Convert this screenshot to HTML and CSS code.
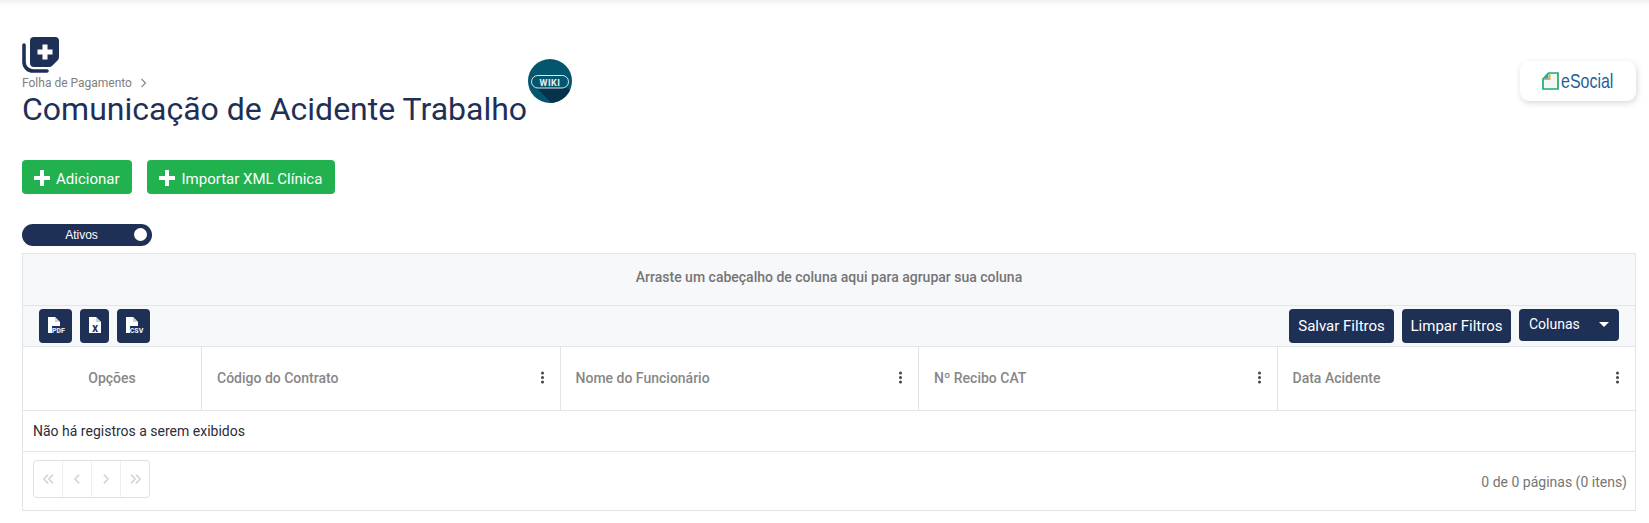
FILE: index.html
```html
<!DOCTYPE html>
<html lang="pt-BR">
<head>
    <meta charset="UTF-8">
    <title>Comunicação de Acidente Trabalho</title>
    <link rel="stylesheet" href="styles.css">
</head>
<body>
    <div class="top-shade"></div>
    <div class="page">
        <div class="header">
            <div class="header-left">
                <svg class="module-icon" width="39" height="38" viewBox="0 0 39 38">
                    <path d="M13 1h21a4 4 0 0 1 4 4v16q0 2-1.500 3.500l-5 5q-1.500 1.500-3.500 1.500H13a4 4 0 0 1-4-4V5a4 4 0 0 1 4-4z" fill="#1f3057"/>
                    <path d="M3 9v17a9 9 0 0 0 9 9h14" fill="none" stroke="#1f3057" stroke-width="3.600" stroke-linecap="round"/>
                    <path d="M21.500 8.500h5v5h5v5h-5v5h-5v-5h-5v-5h5z" fill="#fff"/>
                </svg>
                <div class="breadcrumb">
                    <span>Folha de Pagamento</span>
                    <svg width="8" height="10" viewBox="0 0 8 10"><path d="M1.500 1l4 4-4 4" fill="none" stroke="#8a8a8a" stroke-width="1.200"/></svg>
                </div>
                <div class="title-row">
                    <h1>Comunicação de Acidente Trabalho</h1>
                    <a class="wiki-badge">
                        <svg width="44" height="44" viewBox="0 0 44 44">
                            <defs><clipPath id="wiki-clip"><circle cx="22" cy="22" r="22"/></clipPath></defs>
                            <circle cx="22" cy="22" r="22" fill="#04566f"/>
                            <path d="M9 29h30l8 6v12H26z" fill="#06334a" clip-path="url(#wiki-clip)"/>
                            <rect x="3.500" y="16.500" width="37" height="12.500" rx="6.250" fill="#04566f" stroke="#dfe9ec" stroke-width="1"/>
                            <text x="22" y="26.500" text-anchor="middle" class="wiki-text">WIKI</text>
                        </svg>
                    </a>
                </div>
            </div>
            <div class="esocial-card">
                <svg width="17" height="18" viewBox="0 0 17 18">
                    <path d="M6.500 1H16v16H1V7z" fill="#f4f6f1" stroke="#1fa971" stroke-width="1.700"/>
                    <path d="M6.500 1v6H1z" fill="#2f9fdc"/>
                    <path d="M7 1.500h1.500V8H2V6.500h5z" fill="#f2b01e"/>
                </svg>
                <span>eSocial</span>
            </div>
        </div>

        <div class="actions">
            <button class="btn-green">
                <svg width="16" height="16" viewBox="0 0 16 16"><path d="M6 0h4v6h6v4h-6v6H6v-6H0V6h6z" fill="#fff"/></svg>
                Adicionar
            </button>
            <button class="btn-green">
                <svg width="16" height="16" viewBox="0 0 16 16"><path d="M6 0h4v6h6v4h-6v6H6v-6H0V6h6z" fill="#fff"/></svg>
                Importar XML Clínica
            </button>
        </div>

        <div class="toggle">
            <span>Ativos</span>
            <i class="toggle-knob"></i>
        </div>

        <div class="grid">
            <div class="group-panel">Arraste um cabeçalho de coluna aqui para agrupar sua coluna</div>
            <div class="toolbar">
                <div class="export-icons">
                    <button class="btn-export wide">
                        <svg width="33" height="34" viewBox="0 0 33 34">
                            <path d="M9 8h7l5 5v11H9z" fill="#fff"/><path d="M16 8v5h5z" fill="#c9d2e2"/>
                            <rect x="13" y="17" width="13" height="7.500" fill="#1f3057"/>
                            <text x="19.500" y="23.800" text-anchor="middle" class="file-label">PDF</text>
                        </svg>
                    </button>
                    <button class="btn-export">
                        <svg width="29" height="34" viewBox="0 0 29 34">
                            <path d="M9 8h7l5 5v11H9z" fill="#fff"/><path d="M16 8v5h5z" fill="#c9d2e2"/>
                            <text x="15" y="22.500" text-anchor="middle" class="file-label big">X</text>
                        </svg>
                    </button>
                    <button class="btn-export wide">
                        <svg width="33" height="34" viewBox="0 0 33 34">
                            <path d="M9 8h7l5 5v11H9z" fill="#fff"/><path d="M16 8v5h5z" fill="#c9d2e2"/>
                            <rect x="13" y="17" width="13" height="7.500" fill="#1f3057"/>
                            <text x="19.500" y="23.800" text-anchor="middle" class="file-label">CSV</text>
                        </svg>
                    </button>
                </div>
                <div class="toolbar-right">
                    <button class="btn-navy">Salvar Filtros</button>
                    <button class="btn-navy">Limpar Filtros</button>
                    <button class="btn-navy btn-columns">Colunas <i class="caret"></i></button>
                </div>
            </div>
            <div class="grid-head">
                <div class="col col-options">Opções</div>
                <div class="col"><span>Código do Contrato</span><i class="dots"></i></div>
                <div class="col"><span>Nome do Funcionário</span><i class="dots"></i></div>
                <div class="col"><span>Nº Recibo CAT</span><i class="dots"></i></div>
                <div class="col"><span>Data Acidente</span><i class="dots"></i></div>
            </div>
            <div class="no-records">Não há registros a serem exibidos</div>
            <div class="pager-row">
                <div class="pager">
                    <a><svg width="11" height="10" viewBox="0 0 11 10"><path d="M5 .7L.9 5 5 9.300M10 .7L5.900 5 10 9.300"/></svg></a>
                    <a><svg width="6" height="10" viewBox="0 0 6 10"><path d="M5.200 .7L1 5l4.200 4.300"/></svg></a>
                    <a><svg width="6" height="10" viewBox="0 0 6 10"><path d="M.8 .7L5 5 .8 9.300"/></svg></a>
                    <a><svg width="11" height="10" viewBox="0 0 11 10"><path d="M1 .7L5.100 5 1 9.300M6 .7L10.100 5 6 9.300"/></svg></a>
                </div>
                <div class="pager-info">0 de 0 páginas (0 itens)</div>
            </div>
        </div>
    </div>
</body>
</html>
```

FILE: styles.css
```css
body {
    margin: 0;
    font-family: Roboto, Arial, sans-serif;
    background-color: #fff;
    color: #1f3057;
}

.top-shade {
    height: 6px;
    background: linear-gradient(#f1f1f1, #fff);
}

.page {
    padding: 0 13px 0 22px;
}

.header {
    display: flex;
    justify-content: space-between;
    align-items: flex-start;
    padding-top: 30px;
}

.module-icon {
    display: block;
    margin-left: -1px;
}

.breadcrumb {
    display: flex;
    align-items: center;
    gap: 8px;
    height: 16px;
    padding-top: 1px;
    box-sizing: border-box;
    font-size: 12px;
    color: #808080;
}

.title-row {
    position: relative;
    width: 504px;
}

h1 {
    margin: 0;
    font-size: 32px;
    font-weight: 400;
    line-height: 38px;
    white-space: nowrap;
}

.wiki-badge {
    position: absolute;
    top: -31px;
    right: -46px;
}

.wiki-badge svg {
    display: block;
}

.wiki-text {
    font: 700 9px Roboto, sans-serif;
    fill: #e8f0f2;
    letter-spacing: .5px;
}

.esocial-card {
    display: flex;
    align-items: center;
    width: 116px;
    height: 40px;
    padding-left: 22px;
    box-sizing: border-box;
    margin-top: 25px;
    background: #fff;
    border-radius: 9px;
    box-shadow: 1px 2px 6px rgba(0,0,0,0.16);
    color: #1f5f99;
    font-family: "Liberation Sans", sans-serif;
    font-size: 21px;
}

.esocial-card span {
    display: inline-block;
    margin-left: 2px;
    transform: scaleX(.76);
    transform-origin: left center;
}

.actions {
    display: flex;
    gap: 15px;
    margin-top: 32px;
}

button {
    font-family: Roboto, Arial, sans-serif;
    border: none;
    cursor: pointer;
    color: #fff;
}

.btn-green {
    display: flex;
    align-items: center;
    gap: 6px;
    height: 34px;
    padding: 3px 13px 0 12px;
    background-color: #22b14f;
    border-radius: 4px;
    font-size: 15px;
}

.btn-green svg {
    margin-top: -1px;
}

.toggle {
    position: relative;
    width: 130px;
    height: 22px;
    margin-top: 30px;
    background-color: #1f3057;
    border-radius: 11px;
    color: #fff;
    font-family: "Liberation Sans", Arial, sans-serif;
    font-size: 12px;
    line-height: 23px;
    text-align: center;
}

.toggle span {
    display: block;
    padding-right: 11px;
}

.toggle-knob {
    position: absolute;
    top: 4px;
    right: 5px;
    width: 13px;
    height: 13px;
    background: #fff;
    border-radius: 50%;
}

.grid {
    margin-top: 7px;
    border: 1px solid #e1e4e9;
}

.group-panel {
    height: 51px;
    line-height: 47px;
    text-align: center;
    font-size: 14px;
    font-weight: 500;
    color: #757575;
    background-color: #f7f8fa;
    border-bottom: 1px solid #e1e4e9;
}

.toolbar {
    display: flex;
    justify-content: space-between;
    align-items: flex-start;
    height: 41px;
    padding: 3px 16px 0;
    box-sizing: border-box;
    background-color: #f7f8fa;
    border-bottom: 1px solid #e1e4e9;
}

.export-icons,
.toolbar-right {
    display: flex;
    gap: 8px;
}

.btn-export {
    display: block;
    width: 29px;
    height: 34px;
    padding: 0;
    background-color: #1f3057;
    border-radius: 4px;
}

.btn-export svg {
    display: block;
}

.btn-export.wide {
    width: 33px;
}

.file-label {
    font: 900 7px Roboto, sans-serif;
    fill: #dbe6f5;
}

.file-label.big {
    font-size: 9px;
    fill: #1f3057;
}

.btn-navy {
    height: 34px;
    width: 105px;
    padding: 0;
    background-color: #1f3057;
    border-radius: 4px;
    font-size: 15px;
}

.btn-navy + .btn-navy {
    width: 109px;
}

.btn-navy.btn-columns {
    display: flex;
    align-items: center;
    justify-content: space-between;
    width: 100px;
    height: 32px;
    padding: 0 11px 2px 10px;
    font-size: 14px;
}

.caret {
    border-left: 5px solid transparent;
    border-right: 5px solid transparent;
    border-top: 5px solid #fff;
    margin-right: -1px;
}

.grid-head {
    display: grid;
    grid-template-columns: 178px repeat(4, 1fr);
    height: 63px;
    border-bottom: 1px solid #e1e4e9;
}

.col {
    display: flex;
    justify-content: space-between;
    align-items: center;
    padding: 0 15px 2px;
    border-left: 1px solid #e1e4e9;
    font-size: 14px;
    font-weight: 500;
    color: #878787;
}

.col-options {
    justify-content: center;
    border-left: none;
}

.dots {
    width: 3px;
    height: 3px;
    margin-right: 1px;
    background: #444;
    border-radius: 50%;
    box-shadow: 0 -4.500px 0 #444, 0 4.500px 0 #444;
}

.no-records {
    height: 40px;
    padding-left: 10px;
    line-height: 40px;
    font-size: 14px;
    color: #2c2c3a;
    border-bottom: 1px solid #e1e4e9;
}

.pager-row {
    display: flex;
    justify-content: space-between;
    align-items: center;
    height: 58px;
    padding: 0 8px 0 10px;
}

.pager {
    display: flex;
    height: 38px;
    margin-bottom: 4px;
    box-sizing: border-box;
    border: 1px solid #dee0e4;
    border-radius: 4px;
}

.pager a {
    display: flex;
    align-items: center;
    justify-content: center;
    width: 28px;
    border-left: 1px solid #eceef0;
}

.pager a:first-child {
    border-left: none;
}

.pager svg path {
    fill: none;
    stroke: #d4d6da;
    stroke-width: 1.700;
}

.pager-info {
    margin-top: 1px;
    font-size: 14px;
    color: #757575;
}
```
